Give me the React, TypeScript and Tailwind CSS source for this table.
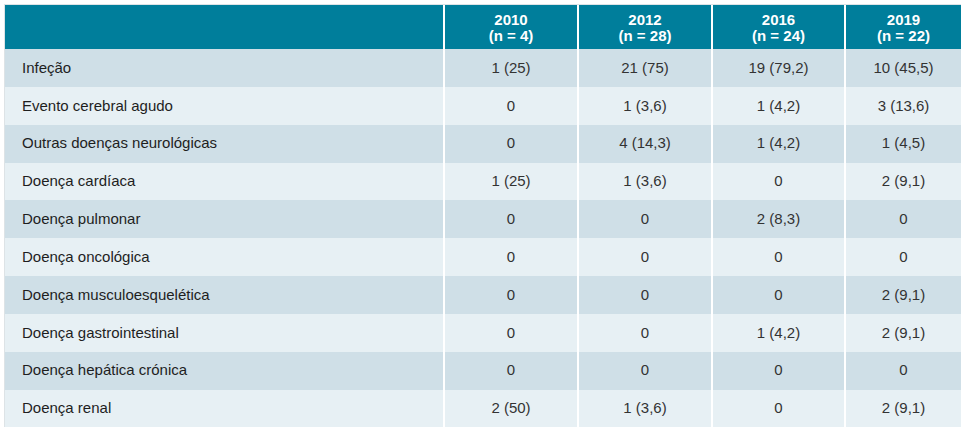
import React from "react";

const rows: [string, string, string, string, string][] = [
  ["Infeção", "1 (25)", "21 (75)", "19 (79,2)", "10 (45,5)"],
  ["Evento cerebral agudo", "0", "1 (3,6)", "1 (4,2)", "3 (13,6)"],
  ["Outras doenças neurológicas", "0", "4 (14,3)", "1 (4,2)", "1 (4,5)"],
  ["Doença cardíaca", "1 (25)", "1 (3,6)", "0", "2 (9,1)"],
  ["Doença pulmonar", "0", "0", "2 (8,3)", "0"],
  ["Doença oncológica", "0", "0", "0", "0"],
  ["Doença musculoesquelética", "0", "0", "0", "2 (9,1)"],
  ["Doença gastrointestinal", "0", "0", "1 (4,2)", "2 (9,1)"],
  ["Doença hepática crónica", "0", "0", "0", "0"],
  ["Doença renal", "2 (50)", "1 (3,6)", "0", "2 (9,1)"],
];

const headers: [string, string][] = [
  ["2010", "(n = 4)"],
  ["2012", "(n = 28)"],
  ["2016", "(n = 24)"],
  ["2019", "(n = 22)"],
];

export default function App() {
  return (
    <div className="w-[966px] h-[436px] bg-white pt-[4px] pl-[4px]" style={{ fontFamily: '"Liberation Sans", Arial, sans-serif' }}>
      <div className="w-[957px] border-t border-l border-[#dde3e6]">
        <div className="grid grid-cols-[438px_132px_132px_131px_115px] grid-rows-[44px_repeat(10,37.85px)] gap-x-[2px] bg-white">
          <div className="bg-[#007e9b]" />
          {headers.map(([y, n]) => (
            <div key={y} className="bg-[#007e9b] text-white font-bold text-[15px] leading-[16px] flex flex-col items-center justify-center pt-[1px]">
              <span>{y}</span>
              <span>{n}</span>
            </div>
          ))}
          {rows.map((r, i) => {
            const bg = i % 2 === 0 ? "bg-[#cfdfe7]" : "bg-[#e7f0f4]";
            return (
              <React.Fragment key={i}>
                <div className={`${bg} flex items-center pl-[17px] text-[15px] text-[#1e1e1e]`}>{r[0]}</div>
                {r.slice(1).map((v, j) => (
                  <div key={j} className={`${bg} flex items-center justify-center text-[15px] text-[#333]`}>{v}</div>
                ))}
              </React.Fragment>
            );
          })}
        </div>
      </div>
    </div>
  );
}
